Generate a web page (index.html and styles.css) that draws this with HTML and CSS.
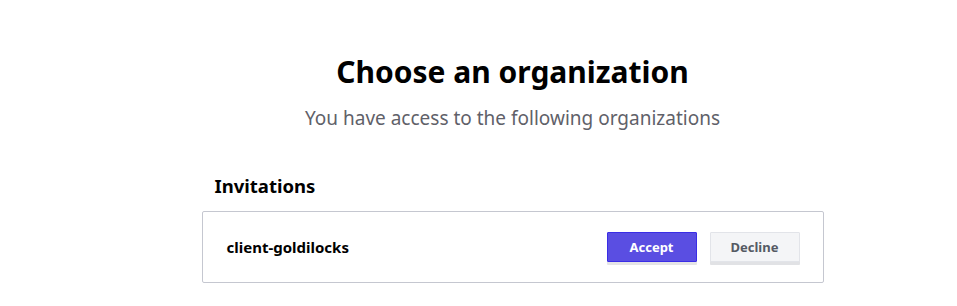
FILE: index.html
```html
<!DOCTYPE html>
<html>
<head>
<meta charset="utf-8">
<link rel="stylesheet" href="styles.css">
</head>
<body>
<div class="layout">
  <aside class="rail"></aside>
  <main class="main">
    <div class="panel">
      <h1 class="title">Choose an organization</h1>
      <p class="subtitle">You have access to the following organizations</p>
      <h2 class="section">Invitations</h2>
      <div class="card">
        <span class="org">client-goldilocks</span>
        <div class="actions">
          <button class="btn btn-accept">Accept</button>
          <button class="btn btn-decline">Decline</button>
        </div>
      </div>
    </div>
  </main>
</div>
</body>
</html>
```
FILE: styles.css
```css
html, body {
  margin: 0;
  padding: 0;
  background: #ffffff;
  font-family: "Noto Sans", "Open Sans", sans-serif;
  color: #000;
}
.layout {
  display: flex;
  width: 957px;
  height: 306px;
}
.rail {
  width: 68px;
  flex: none;
}
.main {
  flex: 1;
  display: flex;
  justify-content: center;
}
.panel {
  width: 622px;
  padding-top: 50px;
}
.title {
  margin: 0;
  text-align: center;
  font-size: 30px;
  line-height: 44px;
  font-weight: 700;
}
.subtitle {
  margin: 10px 0 0;
  text-align: center;
  font-size: 19px;
  line-height: 28px;
  color: #5f6169;
}
.section {
  margin: 40px 0 0 13px;
  font-size: 18.5px;
  line-height: 28px;
  font-weight: 700;
}
.card {
  margin-top: 11px;
  border: 1px solid #c5c7d0;
  border-radius: 2px;
  padding: 20px 23px 20px 24px;
  display: flex;
  align-items: center;
  justify-content: space-between;
}
.org {
  font-size: 15px;
  font-weight: 700;
}
.actions {
  display: flex;
  gap: 13px;
}
.btn {
  width: 90px;
  height: 30px;
  font-family: inherit;
  font-size: 13px;
  font-weight: 700;
  border-radius: 1px;
  box-sizing: border-box;
  cursor: pointer;
}
.btn-accept {
  background: #5a4ee2;
  border: 1px solid #3a2de6;
  color: #fff;
  box-shadow: 0 3px 0 #e4e4e6;
}
.btn-decline {
  background: #f4f5f7;
  border: 1px solid #e2e4e9;
  color: #555a64;
  box-shadow: 0 3px 0 #e1e2e5;
}
```
